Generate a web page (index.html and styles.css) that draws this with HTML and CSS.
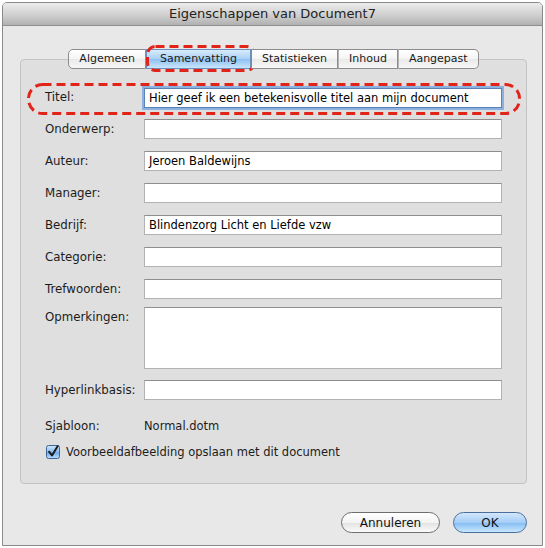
FILE: index.html
```html
<!DOCTYPE html>
<html lang="nl">

<head>
    <meta charset="UTF-8">
    <meta name="viewport" content="width=device-width, initial-scale=1.0">
    <title>Eigenschappen van Document7</title>
    <link rel="stylesheet" href="styles.css">
</head>

<body>
    <div class="window">
        <div class="titlebar">Eigenschappen van Document7</div>
        <div class="content">
            <div class="tabs">
                <span class="tab">Algemeen</span>
                <span class="tab selected">Samenvatting
                    <svg class="mark mark-tab"><rect></rect></svg>
                </span>
                <span class="tab">Statistieken</span>
                <span class="tab">Inhoud</span>
                <span class="tab">Aangepast</span>
            </div>

            <div class="panel">
                <div class="row row-title">
                    <span class="label">Titel:</span>
                    <div class="field focus">Hier geef ik een betekenisvolle titel aan mijn document</div>
                    <svg class="mark mark-row"><rect></rect></svg>
                </div>
                <div class="row first">
                    <span class="label">Onderwerp:</span>
                    <div class="field"></div>
                </div>
                <div class="row">
                    <span class="label">Auteur:</span>
                    <div class="field">Jeroen Baldewijns</div>
                </div>
                <div class="row">
                    <span class="label">Manager:</span>
                    <div class="field"></div>
                </div>
                <div class="row">
                    <span class="label">Bedrijf:</span>
                    <div class="field">Blindenzorg Licht en Liefde vzw</div>
                </div>
                <div class="row">
                    <span class="label">Categorie:</span>
                    <div class="field"></div>
                </div>
                <div class="row">
                    <span class="label">Trefwoorden:</span>
                    <div class="field"></div>
                </div>
                <div class="row row-notes">
                    <span class="label">Opmerkingen:</span>
                    <div class="field area"></div>
                </div>
                <div class="row row-link">
                    <span class="label">Hyperlinkbasis:</span>
                    <div class="field"></div>
                </div>
                <div class="row row-info">
                    <span class="label">Sjabloon:</span>
                    <span class="value">Normal.dotm</span>
                </div>
                <div class="row row-check">
                    <svg class="checkbox" width="14" height="14" viewBox="0 0 14 14">
                        <defs>
                            <linearGradient id="aqua" x1="0" y1="0" x2="0" y2="1">
                                <stop offset="0" stop-color="#d4e8fb"/>
                                <stop offset="0.5" stop-color="#86baf0"/>
                                <stop offset="0.55" stop-color="#6aa8ee"/>
                                <stop offset="1" stop-color="#bfe0fd"/>
                            </linearGradient>
                        </defs>
                        <rect x="0.5" y="0.5" width="13" height="13" rx="2" fill="url(#aqua)" stroke="#3f6594"/>
                        <path d="M3.2 6.8 L6 10.4 L11.6 1.2" fill="none" stroke="#1b1b1b" stroke-width="2" stroke-linecap="round" stroke-linejoin="round"/>
                    </svg>
                    <span>Voorbeeldafbeelding opslaan met dit document</span>
                </div>
            </div>

            <div class="buttons">
                <button class="btn">Annuleren</button>
                <button class="btn default">OK</button>
            </div>
        </div>
    </div>
</body>

</html>
```

FILE: styles.css
```css
* {
    margin: 0;
    padding: 0;
    box-sizing: border-box;
}

body {
    background: #fff;
    font-family: "DejaVu Sans", sans-serif;
    font-size: 11.5px;
    color: #1c1c1c;
}

.window {
    margin: 2px;
    width: 541px;
    height: 544px;
    border: 1px solid #8a8a8a;
    border-radius: 5px 5px 0 0;
    background: #e8e8e8;
    overflow: hidden;
}

.titlebar {
    height: 23px;
    line-height: 22px;
    text-align: center;
    font-size: 13px;
    color: #222;
    background: linear-gradient(#ececec, #cfcfcf 55%, #b1b1b1);
    border-bottom: 1px solid #8e8e8e;
}

.tabs {
    position: relative;
    z-index: 1;
    display: flex;
    justify-content: center;
    margin: 23px 15px -10px 17px;
    font-size: 11px;
}

.tab {
    position: relative;
    height: 20px;
    line-height: 18px;
    padding: 0 10px;
    border: 1px solid #8c8c8c;
    border-left: 1px solid #b4b4b4;
    background: linear-gradient(#ffffff, #f4f4f4 50%, #e9e9e9 51%, #f7f7f7);
    color: #1a1a1a;
}

.tab:first-child {
    border-left-color: #8c8c8c;
    border-radius: 5px 0 0 5px;
}

.tab:last-child {
    border-radius: 0 5px 5px 0;
}

.tab.selected {
    padding: 0 13px;
    border-color: #6d8fb8;
    background: linear-gradient(#d9ebfb, #a9d0f6 50%, #8cc0f3 51%, #c9e5fd);
}

.tab.selected + .tab {
    border-left-color: #6d8fb8;
}

.panel {
    margin: 0 15px 0 17px;
    padding: 26px 24px 23px 24px;
    border: 1px solid #c3c3c3;
    border-radius: 4px;
    background: #dfdfdf;
}

.row {
    position: relative;
    display: flex;
    align-items: flex-start;
    margin-top: 12px;
}

.row-title {
    margin-top: 0;
}

.row-title .label {
    padding-top: 1px;
}

.row.first {
    margin-top: 11px;
}

.row-notes {
    margin-top: 8px;
}

.row-link {
    margin-top: 11px;
}

.row-info {
    margin-top: 18px;
    line-height: 16px;
}

.row-check {
    margin-top: 10px;
    line-height: 16px;
    align-items: center;
}

.label {
    width: 99px;
    flex-shrink: 0;
    line-height: 20px;
    font-size: 11.8px;
    white-space: nowrap;
}

.row-info .label {
    line-height: 16px;
}

.value {
    color: #1c1c1c;
}

.field {
    flex: 1;
    height: 20px;
    line-height: 18px;
    padding: 0 4px;
    background: #fff;
    border: 1px solid #b2b2b2;
    border-top-color: #8e8e8e;
    color: #000;
    white-space: nowrap;
    overflow: hidden;
}

.field.focus {
    margin-top: 2px;
    border-color: #5a82b6;
    box-shadow: 0 0 0 2px #8cb1de;
}

.field.area {
    height: 62px;
}

.checkbox {
    margin: 0 6px 0 1px;
}

.mark {
    position: absolute;
    overflow: visible;
    pointer-events: none;
}

.mark rect {
    x: 1.5px;
    y: 1.5px;
    width: calc(100% - 3px);
    height: calc(100% - 3px);
    fill: none;
    stroke: #e2231a;
    stroke-width: 3;
    stroke-dasharray: 9 5;
}

.mark-tab {
    left: -1px;
    top: -5px;
    width: 110px;
    height: 27px;
}

.mark-tab rect {
    rx: 8px;
}

.mark-row {
    left: -18px;
    top: -3px;
    width: 494px;
    height: 32px;
}

.mark-row rect {
    rx: 14px;
}

.buttons {
    display: flex;
    justify-content: flex-end;
    gap: 13px;
    margin: 28px 15px 0 17px;
}

.btn {
    width: 99px;
    height: 21px;
    border: 1px solid #6e6e6e;
    border-radius: 11px;
    font-family: "DejaVu Sans", sans-serif;
    font-size: 12px;
    color: #111;
    background: linear-gradient(#ffffff, #f3f3f3 50%, #e2e2e2 51%, #fbfbfb);
}

.btn.default {
    width: 74px;
    border-color: #4a6f9f;
    background: linear-gradient(#d3e7fb, #a4cdf6 50%, #84bcf3 51%, #c8e6fe);
}
```
